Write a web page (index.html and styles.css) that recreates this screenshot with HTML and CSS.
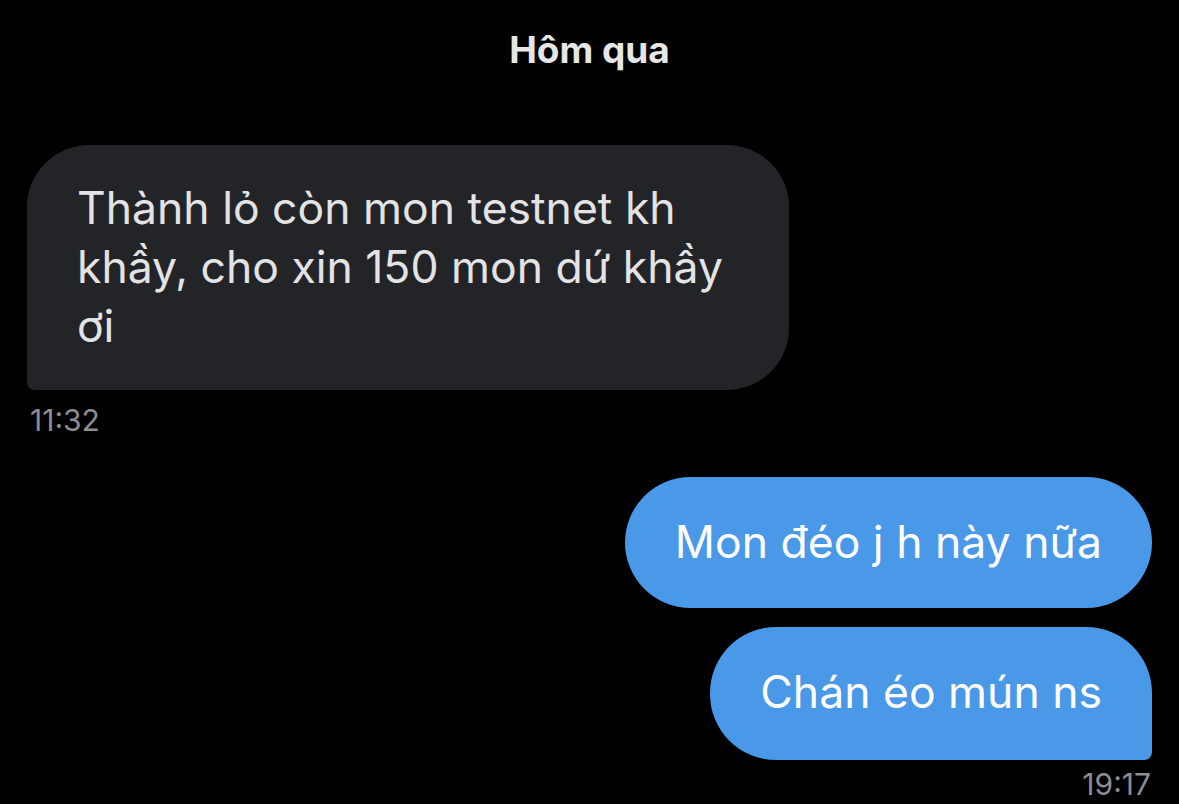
FILE: index.html
```html
<!DOCTYPE html>
<html lang="vi">
<head>
<meta charset="utf-8">
<link rel="stylesheet" href="styles.css">
</head>
<body>
<div class="chat">
  <div class="day">Hôm qua</div>
  <div class="group in">
    <div class="bubble gray">Thành lỏ còn mon testnet kh khầy, cho xin 150 mon dứ khầy ơi</div>
    <div class="time">11:32</div>
  </div>
  <div class="group out">
    <div class="bubble blue first">Mon đéo j h này nữa</div>
    <div class="bubble blue last">Chán éo mún ns</div>
    <div class="time">19:17</div>
  </div>
</div>
</body>
</html>
```
FILE: styles.css
```css
html, body {
  margin: 0;
  padding: 0;
  background: #000;
  height: 100%;
  overflow: hidden;
}
.chat {
  display: flex;
  flex-direction: column;
  padding: 0 27px;
  font-family: Inter, "Noto Sans", sans-serif;
}
.day {
  text-align: center;
  color: #e6e6e6;
  font-weight: 700;
  font-size: 37px;
  line-height: 44px;
  padding-top: 28px;
  height: 145px;
  box-sizing: border-box;
}
.group {
  display: flex;
  flex-direction: column;
}
.group.in { align-items: flex-start; }
.group.out { align-items: flex-end; margin-top: 39px; }
.bubble {
  font-size: 44.5px;
  line-height: 59px;
  box-sizing: border-box;
}
.gray {
  background: #232428;
  color: #e3e3e5;
  width: 762px;
  padding: 34px 40px 34px 50px;
  border-radius: 62px 62px 62px 8px;
}
.blue {
  background: #4a98e8;
  color: #fff;
  padding: 36px 50px;
  border-radius: 66px;
}
.blue.first {
  margin-bottom: 19px;
}
.blue.last {
  border-radius: 66px 66px 8px 66px;
  padding-bottom: 38px;
}
.time {
  color: #8d8d92;
  font-size: 30px;
  line-height: 36px;
  margin-top: 12px;
  padding: 0 3px;
}
.group.out .time {
  margin-top: 6px;
  padding: 0 1px;
}
```
